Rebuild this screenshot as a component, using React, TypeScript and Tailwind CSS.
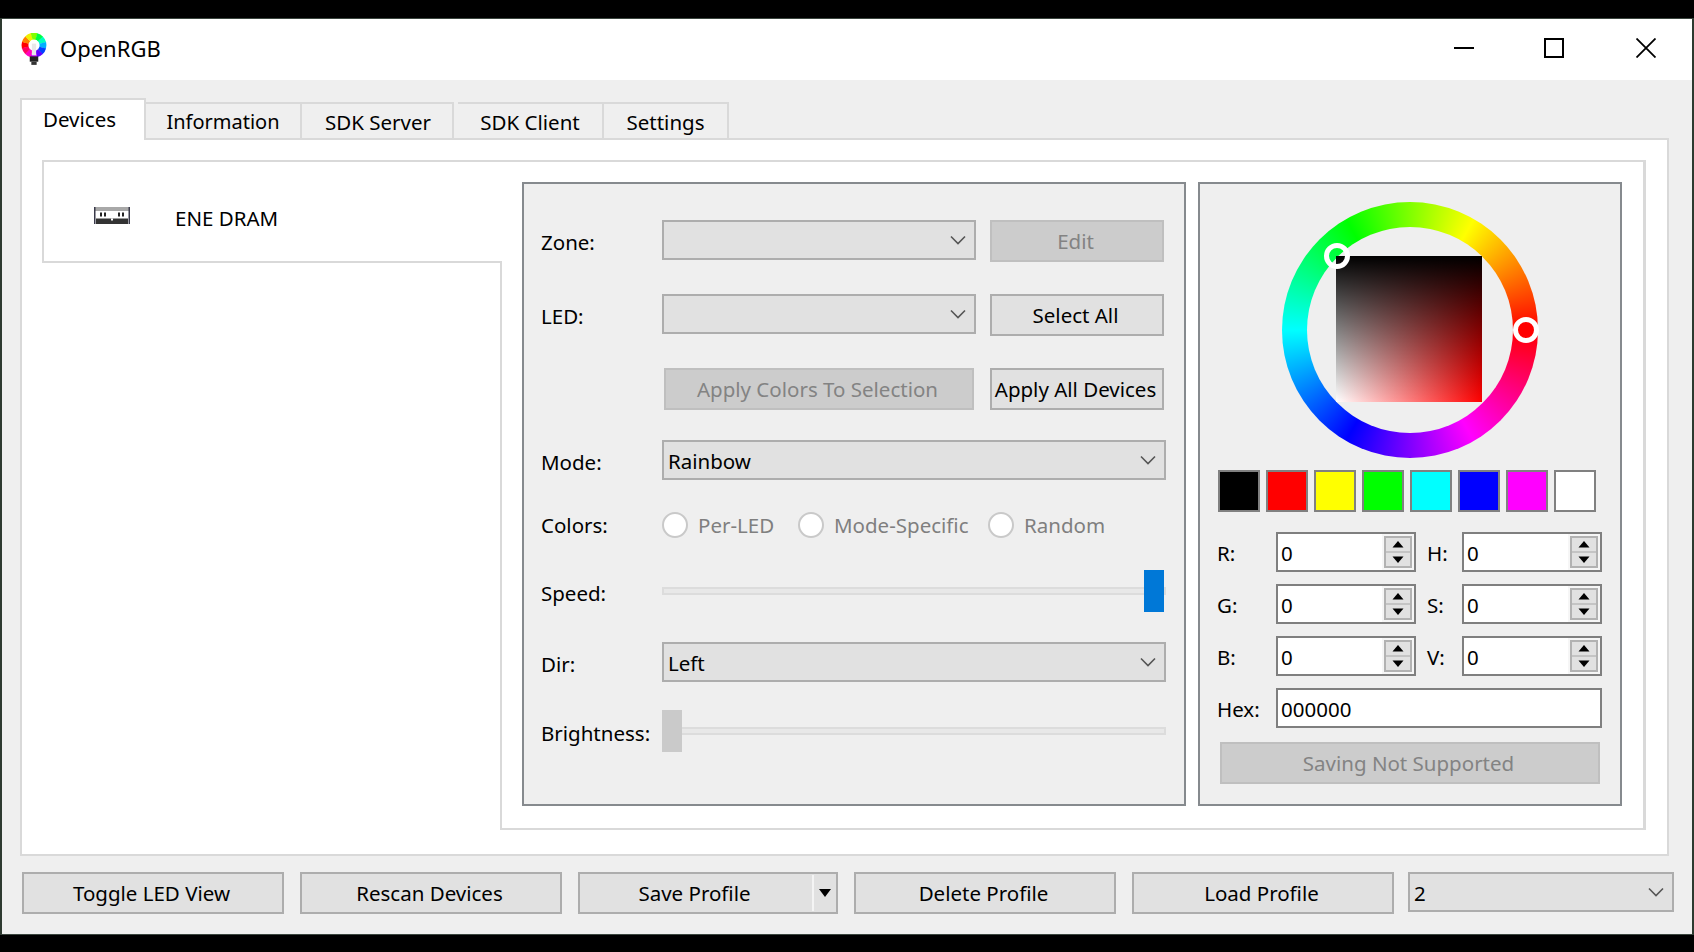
import React from "react";

const Chevron = () => (
  <svg width="16" height="10" viewBox="0 0 16 10" className="shrink-0">
    <path d="M1 1.5 L8 8.5 L15 1.5" fill="none" stroke="#555" strokeWidth="1.6" />
  </svg>
);

const Combo = ({ text, className }: { text?: string; className: string }) => (
  <div className={`flex items-center justify-between border-2 border-[#adadad] bg-[#e1e1e1] pl-[4px] pr-[8px] ${className}`}>
    <span className="pt-[2px]">{text}</span>
    <Chevron />
  </div>
);

const Btn = ({ label, className, disabled }: { label: string; className: string; disabled?: boolean }) => (
  <div
    className={`flex items-center justify-center border-2 pr-[3px] ${
      disabled ? "border-[#bfbfbf] bg-[#cccccc] text-[#838383]" : "border-[#adadad] bg-[#e1e1e1] text-black"
    } ${className}`}
  >
    {label}
  </div>
);

const Row = ({ label, mt, labelClass = "pt-[2px]", children }: { label: string; mt: string; labelClass?: string; children: React.ReactNode }) => (
  <div className={`flex items-start ${mt}`}>
    <div className={`flex h-[42px] w-[121px] items-center ${labelClass}`}>{label}</div>
    {children}
  </div>
);

const Radio = ({ label, w }: { label: string; w: string }) => (
  <div className={`flex items-center text-[#7f7f7f] ${w}`}>
    <span className="mr-[10px] h-[26px] w-[26px] rounded-full border-2 border-[#c9c9c9] bg-white" />
    {label}
  </div>
);

const Slider = ({ thumb }: { thumb: "left" | "right" }) => (
  <div className="relative flex h-[42px] w-[504px] items-center">
    <div className="h-[8px] w-full border-2 border-[#dcdcdc] bg-[#e8e8e8]" />
    {thumb === "right" ? (
      <div className="absolute right-[2px] top-0 h-[42px] w-[20px] bg-[#0078d7]" />
    ) : (
      <div className="absolute left-0 top-0 h-[42px] w-[20px] bg-[#cacaca]" />
    )}
  </div>
);

const Arrow = ({ up }: { up?: boolean }) => (
  <svg width="12" height="7" viewBox="0 0 12 7">
    <path d={up ? "M6 0 L11.5 6.5 L0.5 6.5 Z" : "M0.5 0.5 L11.5 0.5 L6 7 Z"} fill="#000" />
  </svg>
);

const Spin = ({ label, lw, value = "0" }: { label: string; lw: string; value?: string }) => (
  <>
    <div className={`flex items-center pt-[2px] ${lw}`}>{label}</div>
    <div className="flex h-[40px] w-[140px] items-stretch border-2 border-[#7f7f7f] bg-white">
      <div className="flex flex-1 items-center pl-[3px] pt-[2px]">{value}</div>
      <div className="flex w-[32px] items-center justify-start bg-[#f6f6f6] pl-[2px]">
        <div className="flex h-[32px] w-[28px] flex-col border-2 border-[#b2b2b2] bg-[#e1e1e1]">
          <div className="flex flex-1 items-center justify-center border-b-2 border-[#c4c4c4]">
            <Arrow up />
          </div>
          <div className="flex flex-1 items-center justify-center">
            <Arrow />
          </div>
        </div>
      </div>
    </div>
  </>
);

const Swatch = ({ className }: { className: string }) => (
  <div className={`h-[42px] w-[42px] border-2 border-[#808080] ${className}`} />
);

const Logo = () => {
  const colors = ["#ff0000", "#ff8000", "#f0f000", "#80ff00", "#00ff40", "#00ffc0", "#00b0ff", "#0040ff", "#6000ff", "#c000ff", "#ff00c0", "#ff0060"];
  const cx = 12;
  const cy = 11.5;
  const r = 8.5;
  return (
    <svg width="26" height="34" viewBox="0 0 24 32" className="-ml-[1px]">
      {colors.map((c, i) => {
        const a0 = Math.PI + (i - 0.5) * (Math.PI / 6);
        const a1 = a0 + Math.PI / 6 + 0.03;
        return (
          <path
            key={c}
            d={`M${cx + r * Math.cos(a0)} ${cy + r * Math.sin(a0)} A${r} ${r} 0 0 1 ${cx + r * Math.cos(a1)} ${cy + r * Math.sin(a1)}`}
            fill="none"
            stroke={c}
            strokeWidth="6.5"
          />
        );
      })}
      <circle cx="12" cy="10" r="3.6" fill="#fff" />
      <rect x="10" y="10" width="4" height="11" fill="#e8e8e8" />
      <rect x="8" y="22" width="8" height="5" fill="#222" />
      <rect x="9.5" y="27" width="5" height="3" fill="#333" />
    </svg>
  );
};

const RamIcon = () => (
  <svg width="36" height="17" viewBox="0 0 36 17">
    <rect x="0.5" y="0.5" width="35" height="16" fill="#fff" />
    <rect x="0" y="0" width="36" height="4" fill="#a8a8a8" />
    <rect x="0" y="0" width="1.5" height="17" fill="#3a3a4a" />
    <rect x="34.5" y="0" width="1.5" height="17" fill="#3a3a4a" />
    <rect x="2" y="11.5" width="32" height="5.5" fill="#333" />
    <rect x="17" y="11.5" width="2" height="2" fill="#fff" />
    <rect x="6" y="5.5" width="2" height="4" fill="#222" />
    <rect x="10" y="5.5" width="2" height="4" fill="#222" />
    <rect x="24" y="5.5" width="2" height="4" fill="#222" />
    <rect x="28" y="5.5" width="2" height="4" fill="#222" />
  </svg>
);

export default function App() {
  return (
    <div className="flex h-[952px] w-[1694px] flex-col overflow-hidden bg-black pt-[18px] pb-[17px] font-['Noto_Sans','Open_Sans',sans-serif] text-[20.5px] text-black">
      <div className="flex flex-1 flex-col border-x-2 border-y border-x-[#2e3a30] border-y-[#3b463f]">
        {/* title bar */}
        <div className="flex h-[61px] items-center bg-white pl-[20px]">
          <Logo />
          <span className="mb-[2px] ml-[13px] text-[22px]">OpenRGB</span>
          <div className="mb-[3px] ml-auto flex items-center">
            <div className="h-[2px] w-[20px] bg-black" />
            <div className="ml-[70px] h-[20px] w-[20px] border-2 border-black" />
            <svg width="20" height="20" viewBox="0 0 20 20" className="ml-[72px] mr-[36px]">
              <path d="M0.5 0.5 L19.5 19.5 M19.5 0.5 L0.5 19.5" stroke="#000" strokeWidth="1.8" />
            </svg>
          </div>
        </div>

        {/* body */}
        <div className="flex flex-1 flex-col bg-[#efefef] pl-[18px] pr-[18px] pt-[18px]">
          {/* tabs */}
          <div className="relative z-10 -mb-[2px] flex h-[42px] items-end">
            <div className="flex h-[42px] w-[126px] items-start justify-center border-x-2 border-t-2 border-[#d9d9d9] bg-white pr-[7px] pt-[4px]">Devices</div>
            <div className="flex h-[38px] w-[156px] items-start justify-center border-y-2 border-r-2 border-[#d9d9d9] pt-[3px] text-[20px]">Information</div>
            <div className="flex h-[38px] w-[152px] items-start justify-center border-y-2 border-r-2 border-[#d9d9d9] pl-[2px] pt-[3px]">SDK Server</div>
            <div className="ml-[4px] flex h-[38px] w-[146px] items-start justify-center border-y-2 border-r-2 border-[#d9d9d9] pt-[3px]">SDK Client</div>
            <div className="flex h-[38px] w-[125px] items-start justify-center border-y-2 border-r-2 border-[#d9d9d9] pt-[3px]">Settings</div>
          </div>

          {/* tab pane */}
          <div className="mr-[5px] flex h-[718px] border-2 border-[#d9d9d9] bg-white pl-[20px] pt-[20px]">
            {/* device list */}
            <div className="relative z-10 -mr-[2px] w-[460px]">
              <div className="flex h-[103px] items-center border-y-2 border-l-2 border-[#d9d9d9] bg-white">
                <div className="ml-[50px] mt-[8px]">
                  <RamIcon />
                </div>
                <span className="ml-[45px] mt-[13px]">ENE DRAM</span>
              </div>
            </div>

            {/* device page */}
            <div className="flex h-[670px] w-[1146px] gap-[12px] border-2 border-r-[3px] border-[#d9d9d9] bg-white pl-[20px] pt-[20px]">
              {/* controls panel */}
              <div className="h-[624px] w-[664px] border-2 border-[#868a8e] bg-[#efefef] pl-[17px] pt-[36px]">
                <Row label="Zone:" mt="">
                  <Combo className="h-[40px] w-[314px]" />
                  <Btn label="Edit" className="ml-[14px] h-[42px] w-[174px]" disabled />
                </Row>
                <Row label="LED:" mt="mt-[32px]">
                  <Combo className="h-[40px] w-[314px]" />
                  <Btn label="Select All" className="ml-[14px] h-[42px] w-[174px]" />
                </Row>
                <Row label="" mt="mt-[32px]">
                  <Btn label="Apply Colors To Selection" className="ml-[2px] h-[42px] w-[310px]" disabled />
                  <Btn label="Apply All Devices" className="ml-[16px] h-[42px] w-[174px]" />
                </Row>
                <Row label="Mode:" mt="mt-[30px]">
                  <Combo text="Rainbow" className="h-[40px] w-[504px]" />
                </Row>
                <div className="mt-[30px] flex h-[26px] items-center">
                  <div className="w-[121px]">Colors:</div>
                  <Radio label="Per-LED" w="w-[136px]" />
                  <Radio label="Mode-Specific" w="w-[190px]" />
                  <Radio label="Random" w="" />
                </div>
                <Row label="Speed:" mt="mt-[32px]" labelClass="pt-[4px]">
                  <Slider thumb="right" />
                </Row>
                <Row label="Dir:" mt="mt-[30px]">
                  <Combo text="Left" className="h-[40px] w-[504px]" />
                </Row>
                <Row label="Brightness:" mt="mt-[26px]" labelClass="pt-[4px]">
                  <Slider thumb="left" />
                </Row>
              </div>

              {/* colour panel */}
              <div className="h-[624px] w-[424px] border-2 border-[#868a8e] bg-[#efefef] pt-[18px]">
                <div className="relative mx-auto flex h-[256px] w-[256px] items-center justify-center rounded-full bg-[conic-gradient(from_90deg,#ff0000,#ff00ff,#0000ff,#00ffff,#00ff00,#ffff00,#ff0000)]">
                  <div className="flex h-[206px] w-[206px] items-center justify-center rounded-full bg-[#efefef]">
                    <div className="-ml-[3px] -mt-[2px] h-[146px] w-[146px] bg-[linear-gradient(to_top,transparent,#000),linear-gradient(to_right,#fff,#f00)]" />
                  </div>
                  <div className="absolute left-[42px] top-[41px] h-[26px] w-[26px] rounded-full border-[5px] border-white" />
                  <div className="absolute left-[231px] top-[115px] h-[26px] w-[26px] rounded-full border-[5px] border-white bg-[#ff0000]" />
                </div>
                <div className="ml-[18px] mt-[12px] flex gap-[6px]">
                  <Swatch className="bg-black" />
                  <Swatch className="bg-[#ff0000]" />
                  <Swatch className="bg-[#ffff00]" />
                  <Swatch className="bg-[#00ff00]" />
                  <Swatch className="bg-[#00ffff]" />
                  <Swatch className="bg-[#0000ff]" />
                  <Swatch className="bg-[#ff00ff]" />
                  <Swatch className="bg-white" />
                </div>
                <div className="ml-[17px] mt-[20px] grid grid-cols-[59px_140px_46px_140px] gap-y-[12px]">
                  <Spin label="R:" lw="" />
                  <Spin label="H:" lw="pl-[11px]" />
                  <Spin label="G:" lw="" />
                  <Spin label="S:" lw="pl-[11px]" />
                  <Spin label="B:" lw="" />
                  <Spin label="V:" lw="pl-[11px]" />
                </div>
                <div className="ml-[17px] mt-[12px] flex items-center">
                  <div className="w-[59px] pt-[2px]">Hex:</div>
                  <div className="flex h-[40px] w-[326px] items-center border-2 border-[#7f7f7f] bg-white pl-[3px] pt-[2px]">000000</div>
                </div>
                <Btn label="Saving Not Supported" className="ml-[20px] mt-[14px] h-[42px] w-[380px]" disabled />
              </div>
            </div>
          </div>

          {/* bottom row */}
          <div className="ml-[2px] mt-[16px] flex items-start">
            <Btn label="Toggle LED View" className="h-[42px] w-[262px]" />
            <Btn label="Rescan Devices" className="ml-[16px] h-[42px] w-[262px]" />
            <div className="relative ml-[16px] flex h-[42px] w-[260px] items-center border-2 border-[#adadad] bg-[#e1e1e1]">
              <div className="flex w-[232px] justify-center pr-[3px]">Save Profile</div>
              <div className="h-[36px] w-[2px] bg-[#f4f4f4]" />
              <svg width="12" height="8" viewBox="0 0 12 8" className="ml-[5px]">
                <path d="M0 0 L12 0 L6 8 Z" fill="#000" />
              </svg>
            </div>
            <Btn label="Delete Profile" className="ml-[16px] h-[42px] w-[262px]" />
            <Btn label="Load Profile" className="ml-[16px] h-[42px] w-[262px]" />
            <Combo text="2" className="ml-[14px] h-[40px] w-[266px]" />
          </div>
        </div>
      </div>
    </div>
  );
}
